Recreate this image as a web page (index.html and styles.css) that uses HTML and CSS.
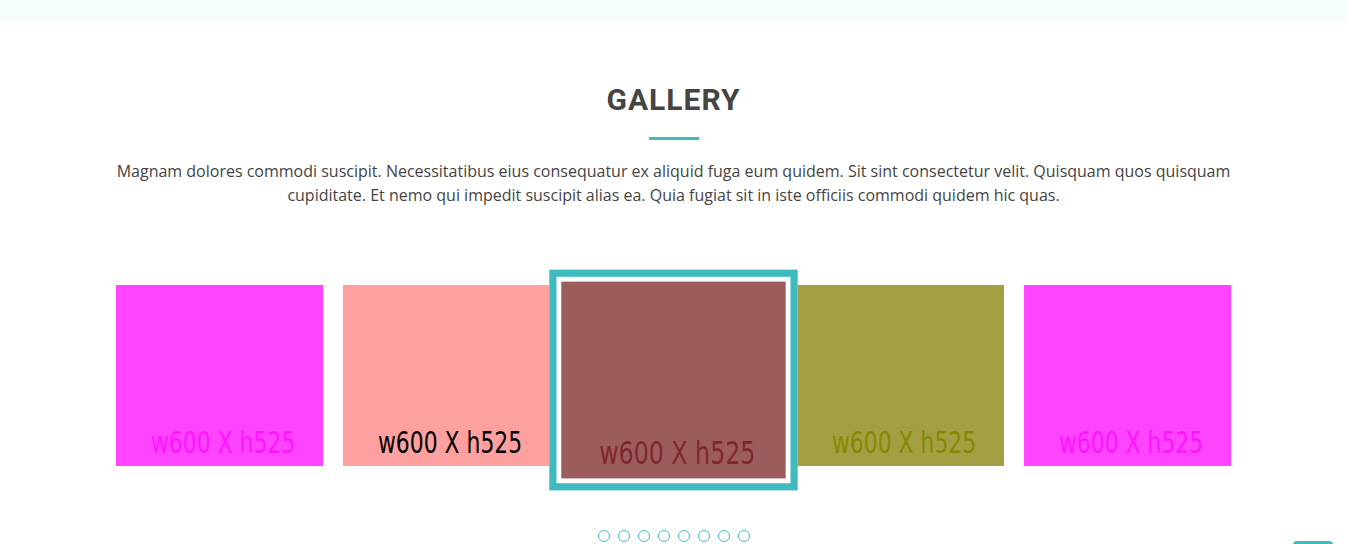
FILE: index.html
```html
<!DOCTYPE html>
<html lang="en">
<head>
<meta charset="utf-8">
<title>Gallery</title>
<link rel="stylesheet" href="styles.css">
</head>
<body>
<div class="topbar"></div>
<section class="gallery">
  <div class="container">
    <div class="section-title">
      <h2>GALLERY</h2>
      <div class="title-line"></div>
      <p>Magnam dolores commodi suscipit. Necessitatibus eius consequatur ex aliquid fuga eum quidem. Sit sint consectetur velit. Quisquam quos quisquam cupiditate. Et nemo qui impedit suscipit alias ea. Quia fugiat sit in iste officiis commodi quidem hic quas.</p>
    </div>
    <div class="slider">
      <div class="slide">
        <div class="ph ph-magenta"><span>w600 X h525</span></div>
      </div>
      <div class="slide">
        <div class="ph ph-pink"><span>w600 X h525</span></div>
      </div>
      <div class="slide slide-active">
        <div class="ph ph-brown"><span>w600 X h525</span></div>
      </div>
      <div class="slide">
        <div class="ph ph-olive"><span>w600 X h525</span></div>
      </div>
      <div class="slide">
        <div class="ph ph-magenta"><span>w600 X h525</span></div>
      </div>
    </div>
    <div class="pagination">
      <span class="bullet"></span>
      <span class="bullet"></span>
      <span class="bullet"></span>
      <span class="bullet"></span>
      <span class="bullet"></span>
      <span class="bullet"></span>
      <span class="bullet"></span>
      <span class="bullet"></span>
    </div>
  </div>
</section>
<a class="back-to-top" href="#"></a>
</body>
</html>
```

FILE: styles.css
```css
* {
  box-sizing: border-box;
}

html, body {
  margin: 0;
  padding: 0;
  background: #fff;
  overflow: hidden;
}

body {
  font-family: "Open Sans", "Liberation Sans", sans-serif;
  color: #444;
}

.topbar {
  height: 21px;
  background: #f6fdfd;
}

.gallery {
  padding-top: 61px;
}

.container {
  width: 1116px;
  margin: 0 auto;
}

.section-title {
  text-align: center;
}

.section-title h2 {
  margin: 0;
  font-family: Roboto, "Liberation Sans", sans-serif;
  font-weight: 700;
  font-size: 30px;
  line-height: 36px;
  letter-spacing: 1px;
  color: #444;
}

.title-line {
  width: 50px;
  height: 3px;
  margin: 19px auto 0;
  background: #3fbbc0;
}

.section-title p {
  margin: 19px 0 0;
  font-size: 16px;
  line-height: 24px;
  color: #444;
}

.slider {
  display: flex;
  align-items: flex-start;
  gap: 20px;
  margin-top: 78px;
}

.slide {
  flex: 0 0 calc((100% - 80px) / 5);
}

.slide-active {
  position: relative;
  z-index: 1;
  border: 6px solid #3fbbc0;
  padding: 4px;
  background: #fff;
  transform: scale(1.2);
  margin-top: 3px;
}

.ph {
  container-type: inline-size;
  aspect-ratio: 600 / 525;
  display: flex;
  align-items: flex-end;
  justify-content: center;
  overflow: hidden;
}

.ph span {
  display: block;
  font-family: "DejaVu Sans Condensed", "DejaVu Sans", sans-serif;
  font-size: 14.5cqw;
  line-height: 1;
  white-space: nowrap;
  padding-left: 4.3cqw;
  padding-bottom: 4cqw;
  transform: scaleX(0.81);
  transform-origin: center bottom;
}

.ph-magenta {
  background: #ff44ff;
  color: #ff14ff;
}

.ph-pink {
  background: #ffa0a0;
  color: #000;
}

.ph-brown {
  background: #9c5c5c;
  color: #80282f;
}

.ph-olive {
  background: #a2a043;
  color: #888800;
}

.pagination {
  display: flex;
  justify-content: center;
  margin-top: 58px;
}

.bullet {
  width: 12px;
  height: 12px;
  margin: 0 4px;
  border-radius: 50%;
  border: 1px solid #3fbbc0;
  background: #fff;
}

.back-to-top {
  position: fixed;
  right: 14px;
  bottom: -37px;
  width: 40px;
  height: 40px;
  border-radius: 4px;
  background: #3fbbc0;
}
```
